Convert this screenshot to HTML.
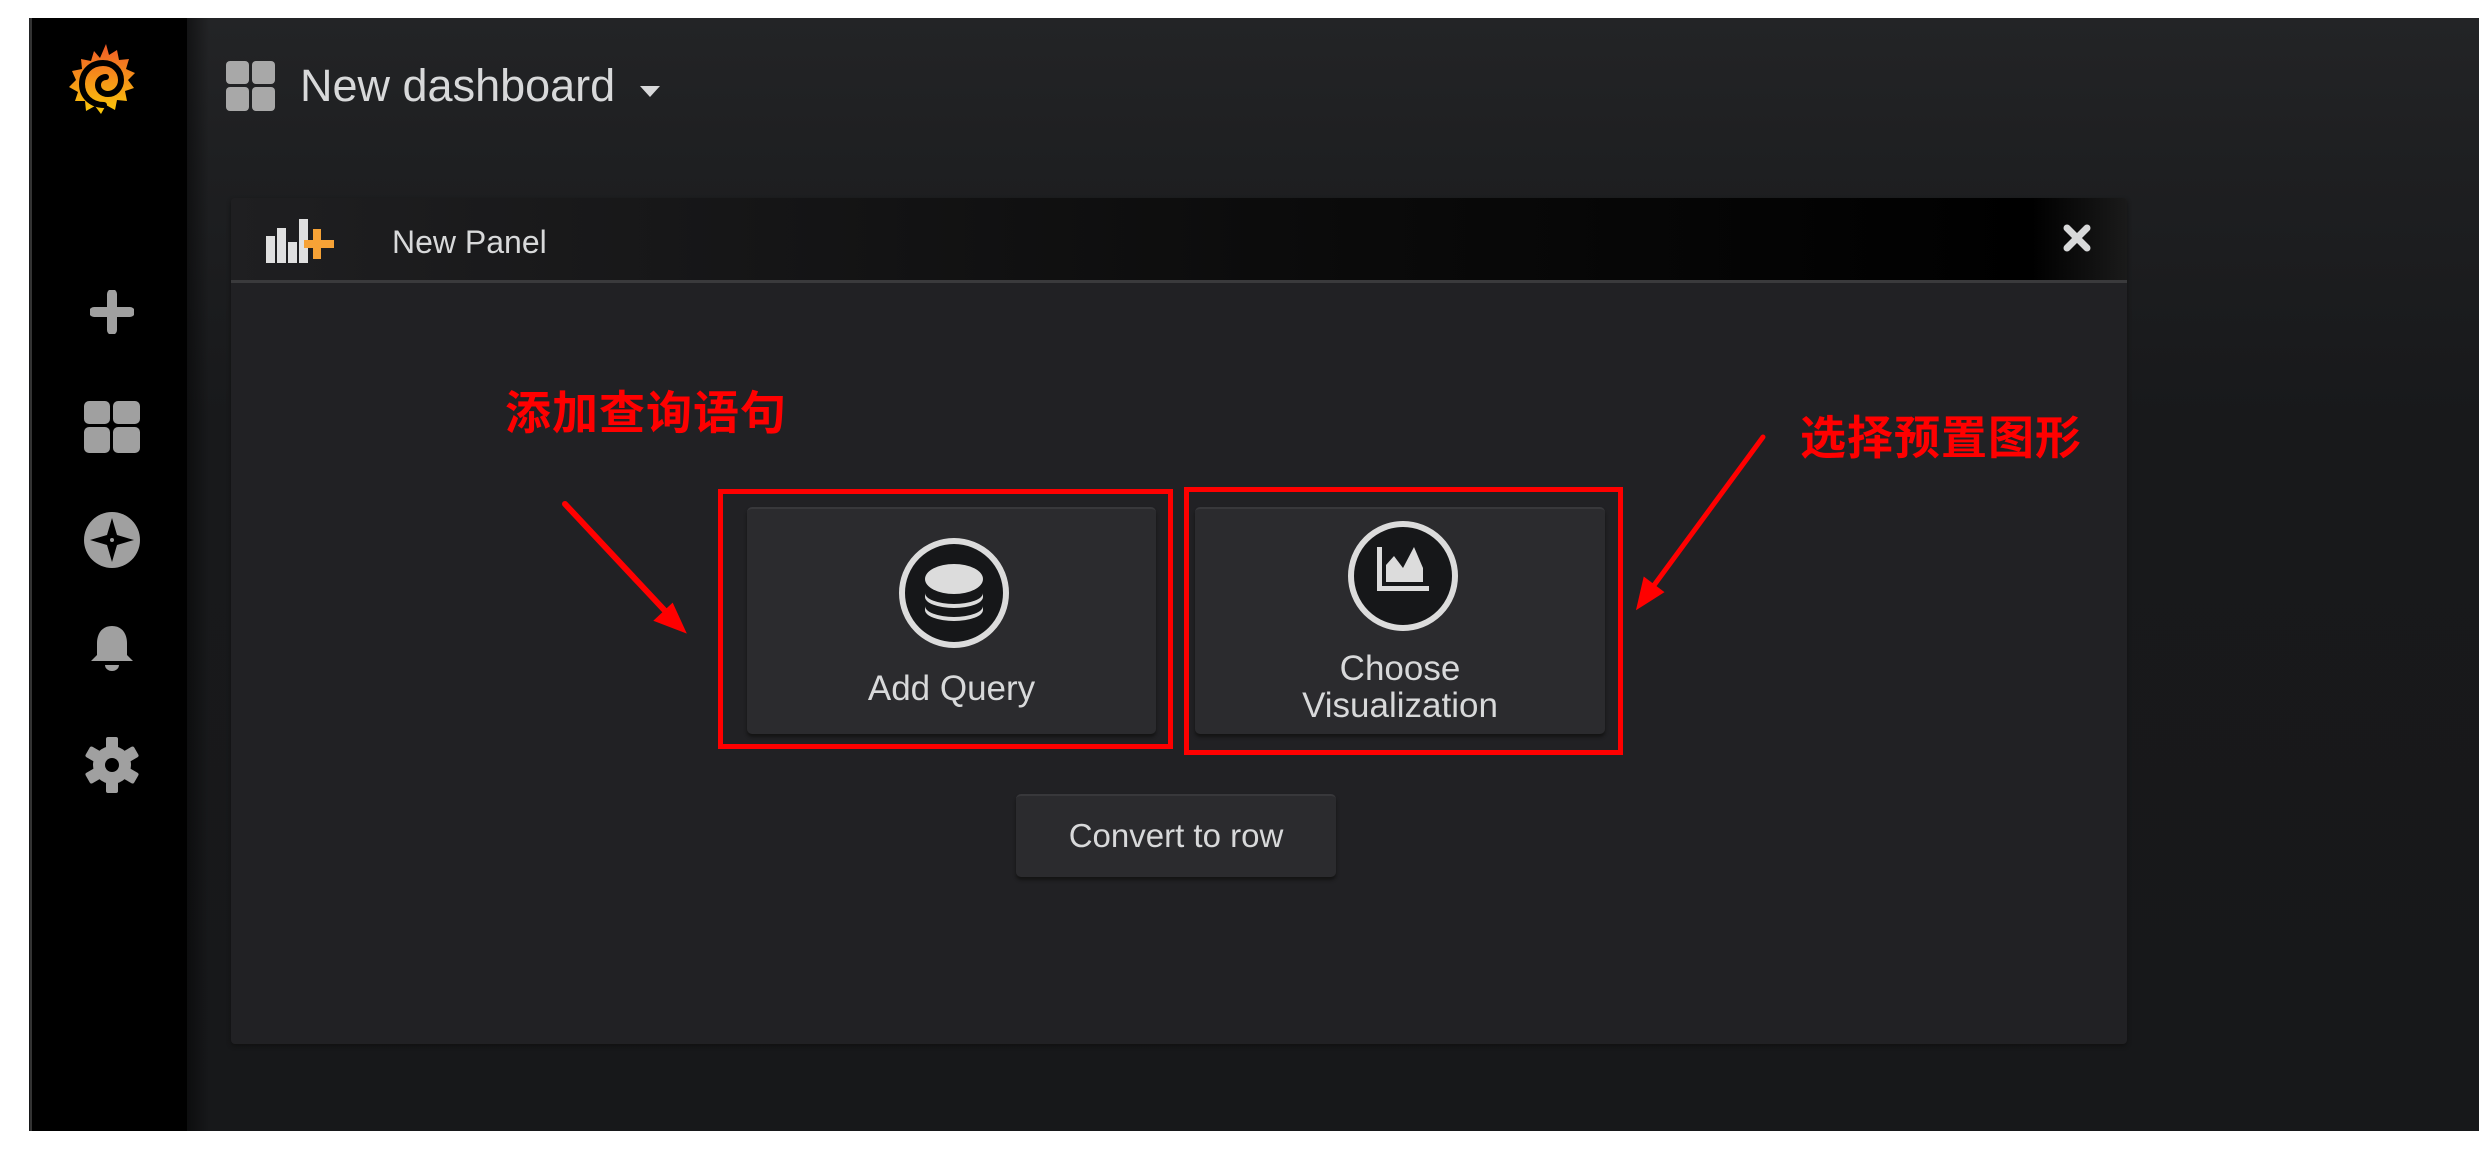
<!DOCTYPE html>
<html><head><meta charset="utf-8"><style>
*{margin:0;padding:0;box-sizing:border-box}
body{width:2490px;height:1154px;background:#fff;position:relative;overflow:hidden;font-family:"Liberation Sans","Noto Sans CJK SC",sans-serif}
.abs{position:absolute}
#frame{left:29px;top:18px;width:2450px;height:1113px;background:linear-gradient(#232426 0px,#1e1f21 150px,#18191b 400px,#17181a)}
#side{left:30px;top:18px;width:157px;height:1113px;background:#000;border-left:2px solid #333}
#sideshadow{left:187px;top:18px;width:22px;height:1113px;background:linear-gradient(90deg,rgba(0,0,0,.45),rgba(0,0,0,0))}
#panel{left:231px;top:198px;width:1896px;height:846px;background:#212124;border-radius:4px;box-shadow:0 2px 4px #111}
#phead{left:231px;top:198px;width:1896px;height:85px;background:linear-gradient(90deg,#1f1f21,#0a0a0a 60%,#000 95%,#1a1a1a);border-bottom:3px solid #3a3a3c;border-radius:4px 4px 0 0}
.btn{background:#2b2b2e;border-top:2px solid #38383b;border-radius:5px;box-shadow:0 3px 3px #141414;color:#d8d9da;text-align:center}
.red{border:5px solid #f00}
.cn{color:#f00;font-weight:bold;font-size:46px;letter-spacing:1px;font-family:"Liberation Sans","Noto Sans CJK SC",sans-serif}
</style></head><body>
<div id="frame" class="abs"></div>
<div id="side" class="abs"></div>
<div id="sideshadow" class="abs"></div>

<svg class="abs" style="left:66px;top:42px" width="76" height="80" viewBox="0 0 76 80">
<defs><linearGradient id="g" x1="0" y1="0" x2="0" y2="1"><stop offset="0" stop-color="#f05a28"/><stop offset="1" stop-color="#fbca0a"/></linearGradient></defs>
<path fill="url(#g)" d="M40 2l3 11 8-5 2 10 10-1-3 10 9 4-7 7 6 8-9 3 2 10-10-1-2 10-9-5-5 9-6-8-9 5-1-10-10 0 3-9-9-5 7-7-4-9 10-2-1-10 10 2 3-10 6 7z"/>
<path d="M38 63c-13 0-22-9-22-21s9-21 21-21c11 0 18 8 18 17 0 8-6 14-13 14-6 0-10-4-10-9s4-8 8-8" stroke="#000" stroke-width="6" fill="none" stroke-linecap="round"/>
</svg>

<svg class="abs" style="left:90px;top:290px" width="44" height="44"><path d="M22 4v36M4 22h36" stroke="#a0a0a0" stroke-width="10" stroke-linecap="round"/></svg>
<svg class="abs" style="left:84px;top:401px" width="56" height="52"><g fill="#a0a0a0"><rect x="0" y="0" width="26" height="23" rx="5"/><rect x="29" y="0" width="27" height="23" rx="5"/><rect x="0" y="26" width="26" height="26" rx="5"/><rect x="29" y="26" width="27" height="26" rx="5"/></g></svg>
<svg class="abs" style="left:84px;top:512px" width="56" height="56"><circle cx="28" cy="28" r="28" fill="#a0a0a0"/><path d="M28 6l5 17 17 5-17 5-5 17-5-17-17-5 17-5z" fill="#000"/><circle cx="28" cy="28" r="2" fill="#a0a0a0"/></svg>
<svg class="abs" style="left:88px;top:624px" width="48" height="50"><path d="M24 2c-11 0-15 9-15 17v12l-6 6h42l-6-6V19c0-8-4-17-15-17z" fill="#a0a0a0"/><path d="M17 41a7 6 0 0 0 14 0z" fill="#a0a0a0"/></svg>
<svg class="abs" style="left:84px;top:737px" width="56" height="56" viewBox="0 0 56 56"><g fill="#a0a0a0"><circle cx="28" cy="28" r="19"/><g id="t"><rect x="22" y="0" width="12" height="14" rx="2"/><rect x="22" y="42" width="12" height="14" rx="2"/></g><use href="#t" transform="rotate(60 28 28)"/><use href="#t" transform="rotate(120 28 28)"/></g><circle cx="28" cy="28" r="7" fill="#000"/></svg>

<svg class="abs" style="left:226px;top:61px" width="50" height="50"><g fill="#a8a8a8"><rect x="0" y="0" width="23" height="23" rx="4"/><rect x="26" y="0" width="23" height="23" rx="4"/><rect x="0" y="26" width="23" height="24" rx="4"/><rect x="26" y="26" width="23" height="24" rx="4"/></g></svg>
<div class="abs" style="left:300px;top:58px;font-size:45px;color:#d8d9da;line-height:56px">New dashboard</div>
<svg class="abs" style="left:640px;top:86px" width="20" height="12"><path d="M0 0h20L10 11z" fill="#d8d9da"/></svg>

<div id="panel" class="abs"></div>
<div id="phead" class="abs"></div>
<svg class="abs" style="left:266px;top:217px" width="88" height="50"><g fill="#e0e0e0"><rect x="0" y="19" width="9" height="27"/><rect x="11" y="11" width="9" height="35"/><rect x="22" y="25" width="9" height="21"/><rect x="33" y="2" width="9" height="44"/></g><path d="M51 12v30M38 27h30" stroke="#f6a236" stroke-width="8"/></svg>
<div class="abs" style="left:392px;top:222px;font-size:32px;color:#d8d9da;line-height:40px">New Panel</div>
<svg class="abs" style="left:2063px;top:224px" width="28" height="28"><path d="M4 4l20 20M24 4L4 24" stroke="#d8d9da" stroke-width="7" stroke-linecap="round"/></svg>

<div class="abs cn" style="left:505px;top:385px;line-height:56px">添加查询语句</div>
<div class="abs cn" style="left:1800px;top:410px;line-height:56px">选择预置图形</div>
<svg class="abs" style="left:0;top:0" width="2490" height="1154">
<path d="M565 504L668 614" stroke="#f00" stroke-width="6" stroke-linecap="round"/>
<path d="M683 630L657 620 672 606z" fill="#f00" stroke="#f00" stroke-width="4"/>
<path d="M1763 437L1652 588" stroke="#f00" stroke-width="5" stroke-linecap="round"/>
<path d="M1639 606L1645 580 1661 592z" fill="#f00" stroke="#f00" stroke-width="4"/>
</svg>

<div class="abs red" style="left:718px;top:489px;width:455px;height:260px"></div>
<div class="abs red" style="left:1184px;top:487px;width:439px;height:268px"></div>

<div class="abs btn" style="left:747px;top:507px;width:409px;height:227px"></div>
<svg class="abs" style="left:898px;top:537px" width="112" height="112"><circle cx="56" cy="56" r="52" fill="#161719" stroke="#dcdcdc" stroke-width="6"/><g fill="#dcdcdc"><ellipse cx="56" cy="42" rx="29" ry="15"/><path d="M27 60a29 11 0 0 0 58 0v-4a29 11 0 0 1-58 0z"/><path d="M27 73a29 11 0 0 0 58 0v-4a29 11 0 0 1-58 0z"/></g></svg>
<div class="abs" style="left:747px;top:668px;width:409px;text-align:center;font-size:35px;color:#d8d9da;line-height:42px">Add Query</div>

<div class="abs btn" style="left:1195px;top:507px;width:410px;height:227px"></div>
<svg class="abs" style="left:1347px;top:520px" width="112" height="112"><circle cx="56" cy="56" r="52" fill="#161719" stroke="#dcdcdc" stroke-width="6"/><g fill="#dcdcdc"><path d="M30 27h5v39h47v5H30z"/><path d="M39 62V45l8-9 9 12 11-21 9 21v14z"/></g></svg>
<div class="abs" style="left:1195px;top:650px;width:410px;text-align:center;font-size:35px;color:#d8d9da;line-height:37px">Choose<br>Visualization</div>

<div class="abs btn" style="left:1016px;top:794px;width:320px;height:83px;font-size:33px;line-height:80px">Convert to row</div>
</body></html>
